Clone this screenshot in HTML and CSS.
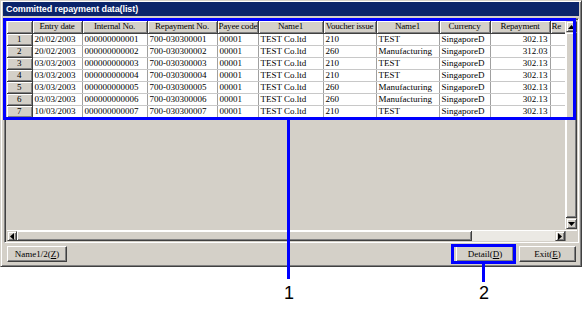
FILE: index.html
```html
<!DOCTYPE html>
<html>
<head>
<meta charset="utf-8">
<link rel="stylesheet" href="styles.css">
</head>
<body>
<div class="stage">
  <div class="window">
    <div class="titlebar">Committed repayment data(list)</div>
    <div class="panel">
      <div class="panel-main">
        <div class="gridarea">
          <table class="grid">
            <colgroup>
              <col class="c-rh"><col class="c1"><col class="c2"><col class="c3"><col class="c4"><col class="c5"><col class="c6"><col class="c7"><col class="c8"><col class="c9"><col class="c10">
            </colgroup>
            <thead>
              <tr>
                <th class="rh"></th><th>Entry date</th><th>Internal No.</th><th>Repayment No.</th><th>Payee code</th><th>Name1</th><th>Voucher issue</th><th>Name1</th><th>Currency</th><th>Repayment</th><th class="cut">Re</th>
              </tr>
            </thead>
            <tbody>
              <tr><th class="rh">1</th><td>20/02/2003</td><td>000000000001</td><td>700-030300001</td><td>00001</td><td>TEST Co.ltd</td><td>210</td><td>TEST</td><td>SingaporeD</td><td class="num">302.13</td><td></td></tr>
              <tr><th class="rh">2</th><td>20/02/2003</td><td>000000000002</td><td>700-030300002</td><td>00001</td><td>TEST Co.ltd</td><td>260</td><td>Manufacturing</td><td>SingaporeD</td><td class="num">312.03</td><td></td></tr>
              <tr><th class="rh">3</th><td>03/03/2003</td><td>000000000003</td><td>700-030300003</td><td>00001</td><td>TEST Co.ltd</td><td>210</td><td>TEST</td><td>SingaporeD</td><td class="num">302.13</td><td></td></tr>
              <tr><th class="rh">4</th><td>03/03/2003</td><td>000000000004</td><td>700-030300004</td><td>00001</td><td>TEST Co.ltd</td><td>210</td><td>TEST</td><td>SingaporeD</td><td class="num">302.13</td><td></td></tr>
              <tr><th class="rh">5</th><td>03/03/2003</td><td>000000000005</td><td>700-030300005</td><td>00001</td><td>TEST Co.ltd</td><td>260</td><td>Manufacturing</td><td>SingaporeD</td><td class="num">302.13</td><td></td></tr>
              <tr><th class="rh">6</th><td>03/03/2003</td><td>000000000006</td><td>700-030300006</td><td>00001</td><td>TEST Co.ltd</td><td>260</td><td>Manufacturing</td><td>SingaporeD</td><td class="num">302.13</td><td></td></tr>
              <tr><th class="rh">7</th><td>10/03/2003</td><td>000000000007</td><td>700-030300007</td><td>00001</td><td>TEST Co.ltd</td><td>210</td><td>TEST</td><td>SingaporeD</td><td class="num">302.13</td><td></td></tr>
            </tbody>
          </table>
        </div>
        <div class="vscroll">
          <div class="sbtn"><svg width="7" height="4" viewBox="0 0 7 4"><path d="M3.5 0 L7 4 L0 4 Z" fill="#000"/></svg></div>
          <div class="vtrack"></div>
          <div class="sbtn"><svg width="7" height="4" viewBox="0 0 7 4"><path d="M0 0 L7 0 L3.5 4 Z" fill="#000"/></svg></div>
        </div>
      </div>
      <div class="hscroll">
        <div class="sbtn hb"><svg width="4" height="7" viewBox="0 0 4 7"><path d="M4 0 L4 7 L0 3.5 Z" fill="#000"/></svg></div>
        <div class="hthumb"></div>
        <div class="htrack"></div>
        <div class="sbtn hb"><svg width="4" height="7" viewBox="0 0 4 7"><path d="M0 0 L4 3.5 L0 7 Z" fill="#000"/></svg></div>
        <div class="corner"></div>
      </div>
    </div>
    <div class="buttons">
      <button class="btn btn-name">Name1/2(<u>Z</u>)</button>
      <span class="spacer"></span>
      <button class="btn btn-detail">Detail(<u>D</u>)</button>
      <button class="btn btn-exit">Exit(<u>E</u>)</button>
    </div>
  </div>

  <div class="hl hl-grid"></div>
  <div class="hl hl-detail"></div>
  <div class="leader leader-1"></div>
  <div class="leader leader-2"></div>
  <div class="callout callout-1">1</div>
  <div class="callout callout-2">2</div>
</div>
</body>
</html>
```

FILE: styles.css
```css
html, body {
  margin: 0;
  padding: 0;
  background: #ffffff;
}

.stage {
  position: relative;
  width: 586px;
  height: 312px;
  overflow: hidden;
}

.window {
  box-sizing: border-box;
  width: 582px;
  height: 267px;
  background: #d4d0c8;
  border-top: 1px solid #d4d0c8;
  border-left: 1px solid #d4d0c8;
  border-right: 1px solid #404040;
  border-bottom: 1px solid #404040;
  box-shadow: inset 1px 1px 0 #ffffff, inset -1px -1px 0 #808080;
  display: flex;
  flex-direction: column;
}

.titlebar {
  height: 14px;
  margin: 1px 2px 0 2px;
  background: #0a246a;
  color: #ffffff;
  font-family: "Liberation Sans", Arial, sans-serif;
  font-weight: bold;
  font-size: 9px;
  letter-spacing: -0.1px;
  line-height: 15px;
  padding-left: 3px;
  white-space: nowrap;
}

.panel {
  margin: 2px 2px 0 3px;
  height: 225px;
  box-sizing: border-box;
  border-top: 1px solid #808080;
  border-left: 1px solid #808080;
  border-right: 1px solid #ffffff;
  border-bottom: 1px solid #ffffff;
  box-shadow: inset 1px 1px 0 #404040, inset -1px -1px 0 #d4d0c8;
  padding: 2px 1px 1px 2px;
  display: flex;
  flex-direction: column;
}

.panel-main {
  flex: 1;
  display: flex;
  min-height: 0;
}

.gridarea {
  flex: 1;
  overflow: hidden;
  background: #d4d0c8;
}

.grid {
  border-collapse: collapse;
  table-layout: fixed;
  width: 575px;
  font-family: "Liberation Serif", "Times New Roman", serif;
  font-size: 9px;
  color: #000;
}

.c-rh { width: 25px; }
.c1 { width: 50px; }
.c2 { width: 65px; }
.c3 { width: 70px; }
.c4 { width: 41px; }
.c5 { width: 65px; }
.c6 { width: 53px; }
.c7 { width: 63px; }
.c8 { width: 51px; }
.c9 { width: 60px; }
.c10 { width: 32px; }

.grid th, .grid td {
  height: 12px;
  padding: 0 2px;
  line-height: 11px;
  white-space: nowrap;
  overflow: hidden;
  box-sizing: border-box;
}

.grid th {
  padding: 0 1px;
  background: #d4d0c8;
  font-weight: normal;
  text-align: center;
  border-right: 1px solid #404040;
  border-bottom: 1px solid #404040;
  box-shadow: inset 1px 1px 0 #ffffff, inset -1px -1px 0 #808080;
}

.grid thead th {
  letter-spacing: -0.2px;
}

.grid th.cut {
  text-align: left;
}

.grid td {
  background: #ffffff;
  border-right: 1px solid #a0a0a0;
  border-bottom: 1px solid #c8c8c8;
  text-align: left;
}

.grid td.num {
  text-align: right;
}

.vscroll {
  width: 11px;
  display: flex;
  flex-direction: column;
  background: #d4d0c8;
  border-left: 1px solid #ffffff;
}

.sbtn {
  box-sizing: border-box;
  width: 11px;
  height: 11px;
  background: #d4d0c8;
  border-top: 1px solid #d4d0c8;
  border-left: 1px solid #d4d0c8;
  border-right: 1px solid #404040;
  border-bottom: 1px solid #404040;
  box-shadow: inset 1px 1px 0 #ffffff, inset -1px -1px 0 #808080;
  display: flex;
  align-items: center;
  justify-content: center;
  flex-shrink: 0;
}

.vtrack {
  flex: 1;
  box-sizing: border-box;
  background: #d4d0c8;
  border-top: 1px solid #d4d0c8;
  border-right: 1px solid #404040;
  border-bottom: 1px solid #404040;
  box-shadow: inset 1px 1px 0 #ffffff, inset -1px -1px 0 #808080;
}

.hscroll {
  height: 10px;
  display: flex;
  margin-top: 1px;
  border-top: 1px solid #ffffff;
}

.sbtn.hb {
  width: 10px;
  height: 10px;
}

.hthumb {
  width: 455px;
  box-sizing: border-box;
  background: #d4d0c8;
  border-right: 1px solid #404040;
  border-bottom: 1px solid #404040;
  box-shadow: inset 1px 1px 0 #ffffff, inset -1px -1px 0 #808080;
}

.htrack {
  flex: 1;
  background: #ebe9e4;
}

.corner {
  width: 12px;
  background: #d4d0c8;
  border-left: 1px solid #808080;
  box-sizing: border-box;
}

.buttons {
  display: flex;
  align-items: center;
  padding: 3px 5px 0 6px;
  gap: 5px;
}

.spacer {
  flex: 1;
}

.btn {
  box-sizing: border-box;
  height: 16px;
  padding: 0;
  margin: 0;
  background: #d4d0c8;
  font-family: "Liberation Serif", "Times New Roman", serif;
  font-size: 9px;
  color: #000;
  border-top: 1px solid #ffffff;
  border-left: 1px solid #ffffff;
  border-right: 1px solid #404040;
  border-bottom: 1px solid #404040;
  box-shadow: inset -1px -1px 0 #808080;
  border-radius: 0;
}

.btn-name { width: 60px; }
.btn-detail { width: 58px; }
.btn-exit { width: 57px; }

.hl {
  position: absolute;
  box-sizing: border-box;
  border: 3px solid #0000ff;
}

.hl-grid {
  left: 3px;
  top: 18px;
  width: 573px;
  height: 102px;
}

.hl-detail {
  left: 451px;
  top: 244px;
  width: 65px;
  height: 20px;
}

.leader {
  position: absolute;
  width: 3px;
  background: #0000ff;
}

.leader-1 {
  left: 287px;
  top: 119px;
  height: 160px;
}

.leader-2 {
  left: 482px;
  top: 263px;
  height: 19px;
}

.callout {
  position: absolute;
  font-family: "Liberation Sans", Arial, sans-serif;
  font-size: 18px;
  line-height: 20px;
  color: #000;
  width: 20px;
  text-align: center;
}

.callout-1 {
  left: 279px;
  top: 283px;
}

.callout-2 {
  left: 474px;
  top: 283px;
}
```
